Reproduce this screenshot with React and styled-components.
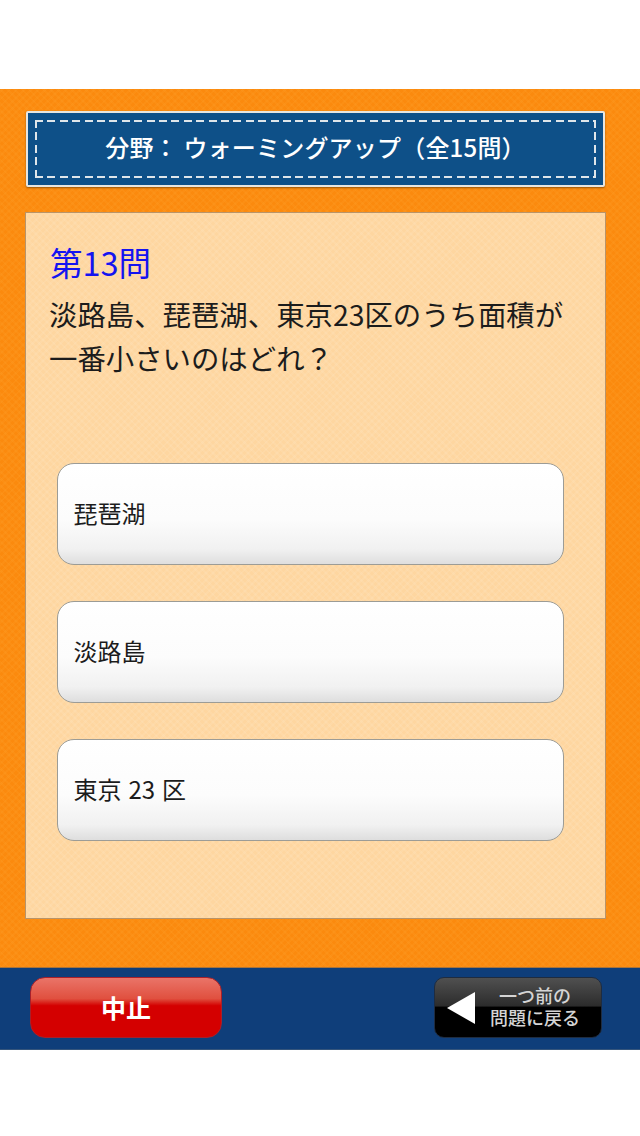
import React from "react";
import styled, { createGlobalStyle } from "styled-components";

const Global = createGlobalStyle`
  html, body { margin: 0; padding: 0; background: #fff; }
  body { font-family: "Noto Sans CJK JP", "Liberation Sans", sans-serif; }
`;
const Page = styled.div`
  width: 640px;
  height: 1136px;
  padding-top: 89px;
  box-sizing: border-box;
  background: #fff;
  overflow: hidden;
`;
const Stage = styled.main`
  height: 878px;
  box-sizing: border-box;
  padding: 22px 34px 0 25px;
  background-color: #fb8a0e;
  background-image:
    repeating-linear-gradient(45deg, rgba(255,165,50,.16) 0 2px, transparent 2px 5px),
    repeating-linear-gradient(-45deg, rgba(255,165,50,.16) 0 2px, transparent 2px 5px);
`;
const TitleBar = styled.header`
  width: 579px;
  height: 76px;
  margin-left: 1px;
  box-sizing: border-box;
  padding: 7px;
  background: #0e5088;
  border: 2px solid #e8e6e0;
  border-radius: 2px;
  box-shadow: 0 1px 2px rgba(110,60,0,.7);
`;
const dashH = "repeating-linear-gradient(90deg, #dfe6ea 0 8px, transparent 8px 12.4px)";
const dashV = "repeating-linear-gradient(180deg, #dfe6ea 0 8px, transparent 8px 12.4px)";
const Stitch = styled.div`
  height: 100%;
  box-sizing: border-box;
  padding-bottom: 6px;
  background-image: ${dashH}, ${dashH}, ${dashV}, ${dashV};
  background-size: 100% 2px, 100% 2px, 2px 100%, 2px 100%;
  background-position: 0 0, 0 100%, 0 0, 100% 0;
  background-repeat: no-repeat;
  display: flex;
  align-items: center;
  justify-content: center;
  color: #fff;
  font-size: 24px;
  font-weight: 500;
  letter-spacing: 0.2px;
  white-space: pre;
`;
const Panel = styled.section`
  width: 581px;
  height: 707px;
  margin-top: 25px;
  box-sizing: border-box;
  padding: 26px 0 0 23px;
  border: 1px solid #b8946a;
  background-color: #fed6a0;
  background-image:
    repeating-linear-gradient(45deg, rgba(255,235,205,.14) 0 2px, transparent 2px 5px),
    repeating-linear-gradient(-45deg, rgba(255,235,205,.14) 0 2px, transparent 2px 5px);
`;
const QNumber = styled.h2`
  margin: 0 0 0 1px;
  font-size: 32.5px;
  line-height: 46px;
  font-weight: 400;
  color: #1414f0;
`;
const Question = styled.p`
  margin: 7px 0 0;
  font-size: 28.4px;
  line-height: 44px;
  color: #1c1c1c;
`;
const Line = styled.span`
  display: block;
  white-space: nowrap;
`;
const Choices = styled.div`
  margin: 83px 0 0 8px;
  display: flex;
  flex-direction: column;
  gap: 36px;
`;
const Choice = styled.button`
  width: 507px;
  height: 102px;
  box-sizing: border-box;
  padding: 0 0 3px 15.5px;
  border: 1.5px solid #9c9c96;
  border-radius: 17px;
  background: linear-gradient(#ffffff 0%, #fcfcfc 55%, #f1f1f1 85%, #dedede 100%);
  font-family: inherit;
  font-size: 24px;
  word-spacing: 1.5px;
  color: #1c1c1c;
  text-align: left;
`;
const Footer = styled.footer`
  height: 83px;
  box-sizing: border-box;
  padding: 9px 38px 0 30px;
  background: #0f3e7a;
  border-top: 1px solid #a9743c;
  border-bottom: 1px solid #35557c;
  display: flex;
  justify-content: space-between;
  align-items: flex-start;
`;
const StopButton = styled.button`
  width: 192px;
  height: 61px;
  padding: 0 0 2px;
  border: 1px solid #a8202a;
  border-radius: 15px;
  background: linear-gradient(#ea7468 0%, #e0503f 35%, #d40000 47%, #d40000 100%);
  color: #fff;
  font-family: inherit;
  font-size: 25px;
  font-weight: 700;
`;
const BackButton = styled.button`
  width: 168px;
  height: 61px;
  box-sizing: border-box;
  padding: 0 0 0 12px;
  border: 1px solid #1f2c40;
  border-radius: 10px;
  background: linear-gradient(#505050 0%, #2c2c2c 47%, #000 50%, #000 100%);
  display: flex;
  align-items: center;
  gap: 15px;
  font-family: inherit;
`;
const BackLabel = styled.span`
  display: block;
  padding-bottom: 4px;
  color: #d4d4d4;
  font-size: 18px;
  line-height: 22px;
  font-weight: 500;
  text-align: center;
`;

export default function App() {
  return (
    <Page>
      <Global />
      <Stage>
        <TitleBar>
          <Stitch>分野： ウォーミングアップ（全15問）</Stitch>
        </TitleBar>
        <Panel>
          <QNumber>第13問</QNumber>
          <Question>
            <Line>淡路島、琵琶湖、東京23区のうち面積が</Line>
            <Line>一番小さいのはどれ？</Line>
          </Question>
          <Choices>
            <Choice>琵琶湖</Choice>
            <Choice>淡路島</Choice>
            <Choice>東京 23 区</Choice>
          </Choices>
        </Panel>
      </Stage>
      <Footer>
        <StopButton>中止</StopButton>
        <BackButton>
          <svg width="28" height="32" viewBox="0 0 28 32">
            <path d="M0 16 L28 0 V32 Z" fill="#fff" />
          </svg>
          <BackLabel>
            <Line>一つ前の</Line>
            <Line>問題に戻る</Line>
          </BackLabel>
        </BackButton>
      </Footer>
    </Page>
  );
}
